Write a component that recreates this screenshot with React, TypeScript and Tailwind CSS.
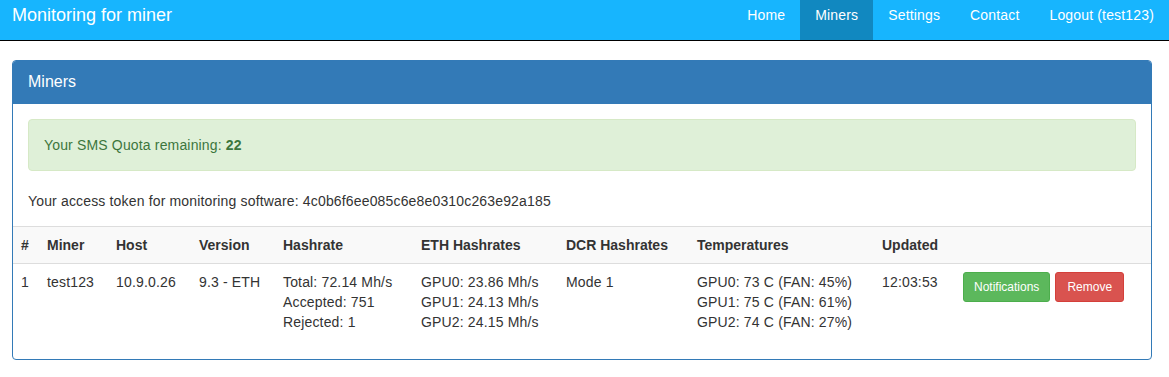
import React from "react";

const cols = [26, 69, 83, 84, 138, 145, 131, 185, 81, 196];

export default function App() {
  const navItems = ["Home", "Miners", "Settings", "Contact", "Logout (test123)"];
  return (
    <div className="min-h-[377px] bg-white text-[14px] leading-[20px] tracking-[0.16px] text-[#333]" style={{ fontFamily: '"Liberation Sans", Arial, sans-serif' }}>
      <nav className="flex h-[41px] items-start justify-between border-b border-black bg-[#17b5fe]">
        <div className="pl-[12px] pt-[3px] text-[18px] leading-[24px] tracking-normal text-white">Monitoring for miner</div>
        <ul className="flex">
          {navItems.map((n) => (
            <li key={n} className={`h-[40px] px-[15px] pt-[5px] text-white ${n === "Miners" ? "bg-[#1188c0]" : ""}`}>
              {n}
            </li>
          ))}
        </ul>
      </nav>
      <div className="ml-[12px] mt-[19px] w-[1140px] overflow-hidden rounded-[4px] border border-[#337ab7]">
        <div className="h-[43px] bg-[#337ab7] px-[15px] pt-[11px] text-[16px] leading-[20px] tracking-normal text-white">Miners</div>
        <div className="px-[15px] pt-[15px]">
          <div className="rounded-[4px] border border-[#d6e9c6] bg-[#dff0d8] p-[15px] text-[#3c763d]">
            Your SMS Quota remaining: <b className="tracking-normal">22</b>
          </div>
          <p className="mt-[20px] pb-[15px]">Your access token for monitoring software: 4c0b6f6ee085c6e8e0310c263e92a185</p>
        </div>
        <table className="w-full table-fixed border-collapse">
          <colgroup>
            {cols.map((w, i) => (
              <col key={i} style={{ width: w }} />
            ))}
          </colgroup>
          <thead>
            <tr className="border-y border-[#ddd] bg-[#f9f9f9] text-left font-bold tracking-normal">
              {["#", "Miner", "Host", "Version", "Hashrate", "ETH Hashrates", "DCR Hashrates", "Temperatures", "Updated", ""].map((h, i) => (
                <th key={i} className="p-[8px] align-bottom">{h}</th>
              ))}
            </tr>
          </thead>
          <tbody>
            <tr className="align-top">
              <td className="p-[8px]">1</td>
              <td className="p-[8px]">test123</td>
              <td className="p-[8px]">10.9.0.26</td>
              <td className="p-[8px]">9.3 - ETH</td>
              <td className="p-[8px]">
                <div>Total: 72.14 Mh/s</div>
                <div>Accepted: 751</div>
                <div>Rejected: 1</div>
              </td>
              <td className="p-[8px]">
                <div>GPU0: 23.86 Mh/s</div>
                <div>GPU1: 24.13 Mh/s</div>
                <div>GPU2: 24.15 Mh/s</div>
              </td>
              <td className="p-[8px]">Mode 1</td>
              <td className="p-[8px]">
                <div>GPU0: 73 C (FAN: 45%)</div>
                <div>GPU1: 75 C (FAN: 61%)</div>
                <div>GPU2: 74 C (FAN: 27%)</div>
              </td>
              <td className="p-[8px]">12:03:53</td>
              <td className="p-[8px]">
                <div className="flex gap-[5px] tracking-normal">
                  <button className="h-[30px] rounded-[3px] border border-[#4cae4c] bg-[#5cb85c] px-[10px] text-[12px] leading-[18px] text-white">Notifications</button>
                  <button className="h-[30px] rounded-[3px] border border-[#d43f3a] bg-[#d9534f] px-[11px] text-[12px] leading-[18px] text-white">Remove</button>
                </div>
              </td>
            </tr>
          </tbody>
        </table>
        <div className="h-[19px]" />
      </div>
    </div>
  );
}
